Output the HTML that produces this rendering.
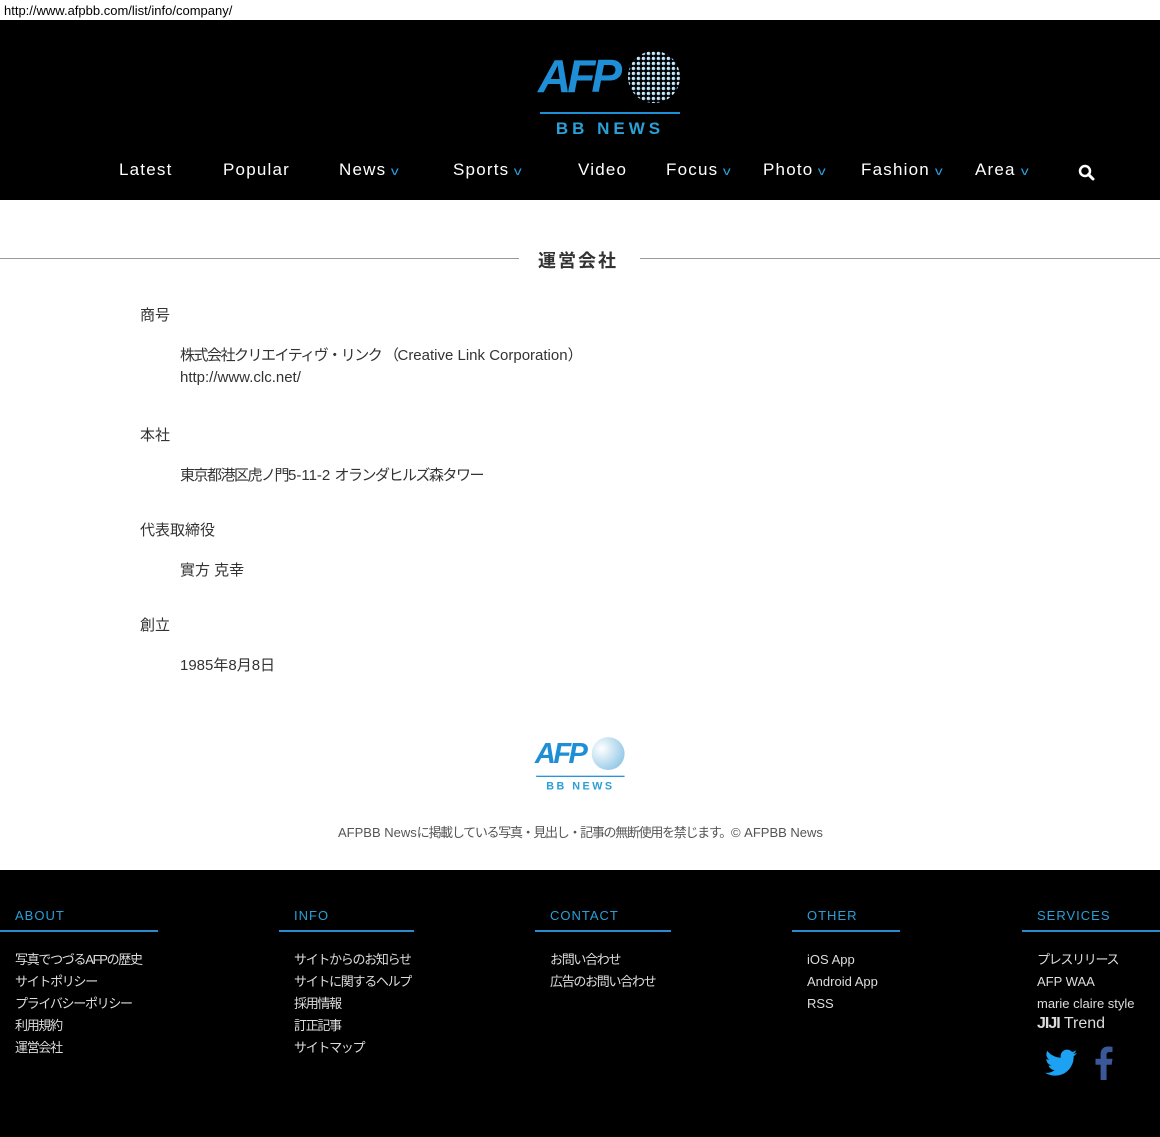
<!DOCTYPE html>
<html><head><meta charset="utf-8"><style>
*{margin:0;padding:0;box-sizing:border-box}
body{width:1160px;height:1137px;background:#fff;font-family:"Liberation Sans","Noto Sans CJK JP",sans-serif;position:relative;overflow:hidden}
.a{position:absolute;white-space:nowrap}
.url{left:4px;top:3px;font-size:13px;color:#000}
.hdr{left:0;top:20px;width:1160px;height:180px;background:#000}
.nav{top:160px;color:#fff;font-size:17px;letter-spacing:1.2px}
.chev{color:#29a3e0;font-size:12px;margin-left:6px;display:inline-block;transform:scaleX(1.3)}
.t{color:#333;font-size:15px}
.j{letter-spacing:-1.5px}
.fh{color:#2aa0d8;font-size:13px;letter-spacing:1px;top:908px}
.fl{position:absolute;top:930px;height:2px;background:#2a8ccc}
.fi{color:#ddd;font-size:13px;line-height:22px;top:949px}
.fi .j{letter-spacing:-1.3px}
</style></head><body>
<div class="a url">http://www.afpbb.com/list/info/company/</div>
<div class="a hdr"></div>
<svg class="a" style="left:536px;top:46px" width="150" height="95" viewBox="0 0 150 95">
<defs><radialGradient id="g" cx="0.3" cy="0.35" r="0.8"><stop offset="0" stop-color="#fff"/><stop offset="1" stop-color="#6ab0d8"/></radialGradient>
<pattern id="d" width="5" height="5" patternUnits="userSpaceOnUse"><circle cx="2.5" cy="2.5" r="1.8" fill="url(#g)"/></pattern></defs>
<circle cx="118" cy="31" r="26" fill="url(#d)"/>
<text x="2" y="46" font-family="Liberation Sans" font-weight="bold" font-style="italic" font-size="46" fill="#1e8fd6" letter-spacing="-4">AFP</text>
<rect x="4" y="66" width="140" height="2" fill="#1e8fd6"/>
<text x="74" y="88" text-anchor="middle" font-family="Liberation Sans" font-weight="bold" font-size="17" fill="#2aa0d8" letter-spacing="4">BB NEWS</text>
</svg>
<div class="a nav" style="left:119px">Latest</div>
<div class="a nav" style="left:223px">Popular</div>
<div class="a nav" style="left:339px">News<span class="chev">v</span></div>
<div class="a nav" style="left:453px">Sports<span class="chev">v</span></div>
<div class="a nav" style="left:578px">Video</div>
<div class="a nav" style="left:666px">Focus<span class="chev">v</span></div>
<div class="a nav" style="left:763px">Photo<span class="chev">v</span></div>
<div class="a nav" style="left:861px">Fashion<span class="chev">v</span></div>
<div class="a nav" style="left:975px">Area<span class="chev">v</span></div>
<svg class="a" style="left:1078px;top:164px" width="18" height="18" viewBox="0 0 18 18"><circle cx="7" cy="7" r="5" fill="none" stroke="#fff" stroke-width="2.5"/><path d="M10.5 10.5 L15 15" stroke="#fff" stroke-width="3" stroke-linecap="round"/></svg>

<div class="a" style="left:0;top:258px;width:519px;height:1px;background:#999"></div>
<div class="a" style="left:640px;top:258px;width:520px;height:1px;background:#999"></div>
<div class="a" style="left:538px;top:247px;font-size:18px;font-weight:bold;color:#333;letter-spacing:2px">運営会社</div>

<div class="a t" style="left:140px;top:304px">商号</div>
<div class="a t" style="left:180px;top:344px"><span class="j">株式会社クリエイティヴ・リンク （</span>Creative Link Corporation）</div>
<div class="a t" style="left:180px;top:369px">http://www.clc.net/</div>
<div class="a t" style="left:140px;top:424px">本社</div>
<div class="a t" style="left:180px;top:464px"><span class="j">東京都港区虎ノ門</span>5-11-2 <span class="j">オランダヒルズ森タワー</span></div>
<div class="a t" style="left:140px;top:519px">代表取締役</div>
<div class="a t" style="left:180px;top:559px">實方 克幸</div>
<div class="a t" style="left:140px;top:614px">創立</div>
<div class="a t" style="left:180px;top:654px">1985年8月8日</div>

<svg class="a" style="left:533px;top:734px" width="96" height="60" viewBox="0 0 150 95">
<defs><radialGradient id="g2" cx="0.3" cy="0.35" r="0.8"><stop offset="0" stop-color="#fff"/><stop offset="1" stop-color="#8cc4e4"/></radialGradient></defs>
<circle cx="118" cy="31" r="26" fill="url(#g2)"/>
<text x="2" y="46" font-family="Liberation Sans" font-weight="bold" font-style="italic" font-size="46" fill="#1e8fd6" letter-spacing="-4">AFP</text>
<rect x="4" y="66" width="140" height="2" fill="#1e8fd6"/>
<text x="74" y="88" text-anchor="middle" font-family="Liberation Sans" font-weight="bold" font-size="17" fill="#2aa0d8" letter-spacing="4">BB NEWS</text>
</svg>
<div class="a" style="left:338px;top:822px;font-size:13px;color:#555">AFPBB News<span style="letter-spacing:-1.3px">に掲載している写真・見出し・記事の無断使用を禁じます。</span>© AFPBB News</div>

<div class="a" style="left:0;top:870px;width:1160px;height:267px;background:#000"></div>
<div class="a fh" style="left:15px">ABOUT</div><div class="fl" style="left:0;width:158px"></div>
<div class="a fh" style="left:294px">INFO</div><div class="fl" style="left:279px;width:135px"></div>
<div class="a fh" style="left:550px">CONTACT</div><div class="fl" style="left:535px;width:136px"></div>
<div class="a fh" style="left:807px">OTHER</div><div class="fl" style="left:792px;width:108px"></div>
<div class="a fh" style="left:1037px">SERVICES</div><div class="fl" style="left:1022px;width:138px"></div>
<div class="a fi" style="left:15px"><span class="j">写真でつづるAFPの歴史<br>サイトポリシー<br>プライバシーポリシー<br>利用規約<br>運営会社</span></div>
<div class="a fi" style="left:294px"><span class="j">サイトからのお知らせ<br>サイトに関するヘルプ<br>採用情報<br>訂正記事<br>サイトマップ</span></div>
<div class="a fi" style="left:550px"><span class="j">お問い合わせ<br>広告のお問い合わせ</span></div>
<div class="a fi" style="left:807px">iOS App<br>Android App<br>RSS</div>
<div class="a fi" style="left:1037px"><span class="j">プレスリリース</span><br>AFP WAA<br>marie claire style</div>
<div class="a" style="left:1037px;top:1015px;color:#ddd;font-size:16px"><b style="letter-spacing:-1px">JIJI</b> Trend</div>
<svg class="a" style="left:1045px;top:1049px" width="32" height="28" viewBox="0 0 24 20"><path d="M24 2.4c-.9.4-1.8.7-2.8.8 1-.6 1.8-1.600 2.2-2.7-1 .6-2 1-3.1 1.2C19.3.7 18 0 16.6 0c-2.7 0-4.9 2.2-4.9 4.9 0 .4 0 .8.1 1.1C7.700 5.800 4.100 3.900 1.700.9c-.4.7-.7 1.6-.7 2.5 0 1.7.9 3.2 2.2 4.1-.8 0-1.6-.2-2.2-.6v.1c0 2.4 1.7 4.4 3.9 4.8-.4.1-.8.2-1.3.2-.3 0-.6 0-.9-.1.6 2 2.4 3.4 4.6 3.4-1.7 1.3-3.8 2.1-6.1 2.1-.4 0-.8 0-1.2-.1 2.2 1.4 4.8 2.2 7.5 2.2 9.1 0 14-7.5 14-14v-.6c1-.7 1.8-1.6 2.5-2.5z" fill="#1da1f2"/></svg>
<svg class="a" style="left:1094px;top:1046px" width="20" height="34" viewBox="0 0 10 20"><path d="M6.5 20V11h3l.5-3.5H6.5V5.3c0-1 .3-1.7 1.7-1.7H10V.5C9.7.4 8.6.3 7.4.3 4.8.3 3 1.9 3 4.8v2.7H0V11h3v9z" fill="#3b5998"/></svg>
</body></html>
